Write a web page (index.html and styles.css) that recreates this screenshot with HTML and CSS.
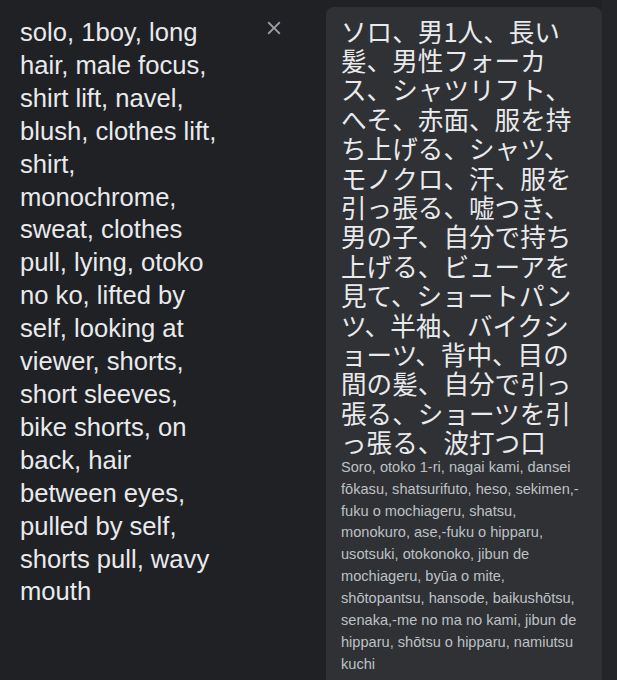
FILE: index.html
```html
<!DOCTYPE html>
<html lang="en">
<head>
<meta charset="utf-8">
<title>Translate</title>
<link rel="stylesheet" href="styles.css">
</head>
<body>
<div class="page">
  <section class="source">
    <div class="source-text">solo, 1boy, long hair, male focus, shirt lift, navel, blush, clothes lift, shirt, monochrome, sweat, clothes pull, lying, otoko no ko, lifted by self, looking at viewer, shorts, short sleeves, bike shorts, on back, hair between eyes, pulled by self, shorts pull, wavy mouth</div>
    <button class="clear-btn" aria-label="Clear source text">
      <svg viewBox="0 0 24 24" width="22" height="22"><path d="M19 6.41L17.59 5 12 10.59 6.41 5 5 6.41 10.59 12 5 17.59 6.41 19 12 13.41 17.59 19 19 17.59 13.41 12z"/></svg>
    </button>
  </section>
  <section class="target" lang="ja">
    <div class="target-text">ソロ、男1人、長い髪、男性フォーカス、シャツリフト、へそ、赤面、服を持ち上げる、シャツ、モノクロ、汗、服を引っ張る、嘘つき、男の子、自分で持ち上げる、ビューアを見て、ショートパンツ、半袖、バイクショーツ、背中、目の間の髪、自分で引っ張る、ショーツを引っ張る、波打つ口</div>
    <div class="romanization" lang="en">Soro, otoko 1-ri, nagai kami, dansei fōkasu, shatsurifuto, heso, sekimen,-fuku o mochiageru, shatsu, monokuro, ase,-fuku o hipparu, usotsuki, otokonoko, jibun de mochiageru, byūa o mite, shōtopantsu, hansode, baikushōtsu, senaka,-me no ma no kami, jibun de hipparu, shōtsu o hipparu, namiutsu kuchi</div>
  </section>
  <div class="scroll-track"></div>
</div>
</body>
</html>
```

FILE: styles.css
```css
html, body {
  margin: 0;
  padding: 0;
  background: #202124;
  height: 100%;
  overflow: hidden;
}

.page {
  display: flex;
  align-items: flex-start;
  height: 100vh;
  font-family: "Liberation Sans", Arial, sans-serif;
}

.source {
  width: 326px;
  flex: none;
  display: flex;
  align-items: flex-start;
  padding: 16px 0 0 20px;
  box-sizing: border-box;
}

.source-text {
  width: 205px;
  flex: none;
  color: #e8eaed;
  font-size: 25.6px;
  line-height: 32.9px;
}

.clear-btn {
  margin: 0.7px 0 0 37.5px;
  padding: 0;
  border: 0;
  background: none;
  width: 22px;
  height: 22px;
  display: flex;
}

.clear-btn svg {
  fill: #9aa0a6;
}

.target {
  width: 276px;
  flex: none;
  align-self: stretch;
  margin-top: 7px;
  box-sizing: border-box;
  padding: 8.5px 20px 0 15px;
  background: #303134;
  border-radius: 8px 8px 0 0;
}

.target-text {
  color: #e8eaed;
  font-family: "Noto Sans CJK JP", "Liberation Sans", sans-serif;
  font-size: 25.6px;
  line-height: 29.4px;
}

.romanization {
  color: #bdc1c6;
  font-family: "Liberation Sans", Arial, sans-serif;
  font-size: 14.6px;
  line-height: 21.95px;
}

.scroll-track {
  flex: 1;
  align-self: stretch;
  background: #242528;
}
```
